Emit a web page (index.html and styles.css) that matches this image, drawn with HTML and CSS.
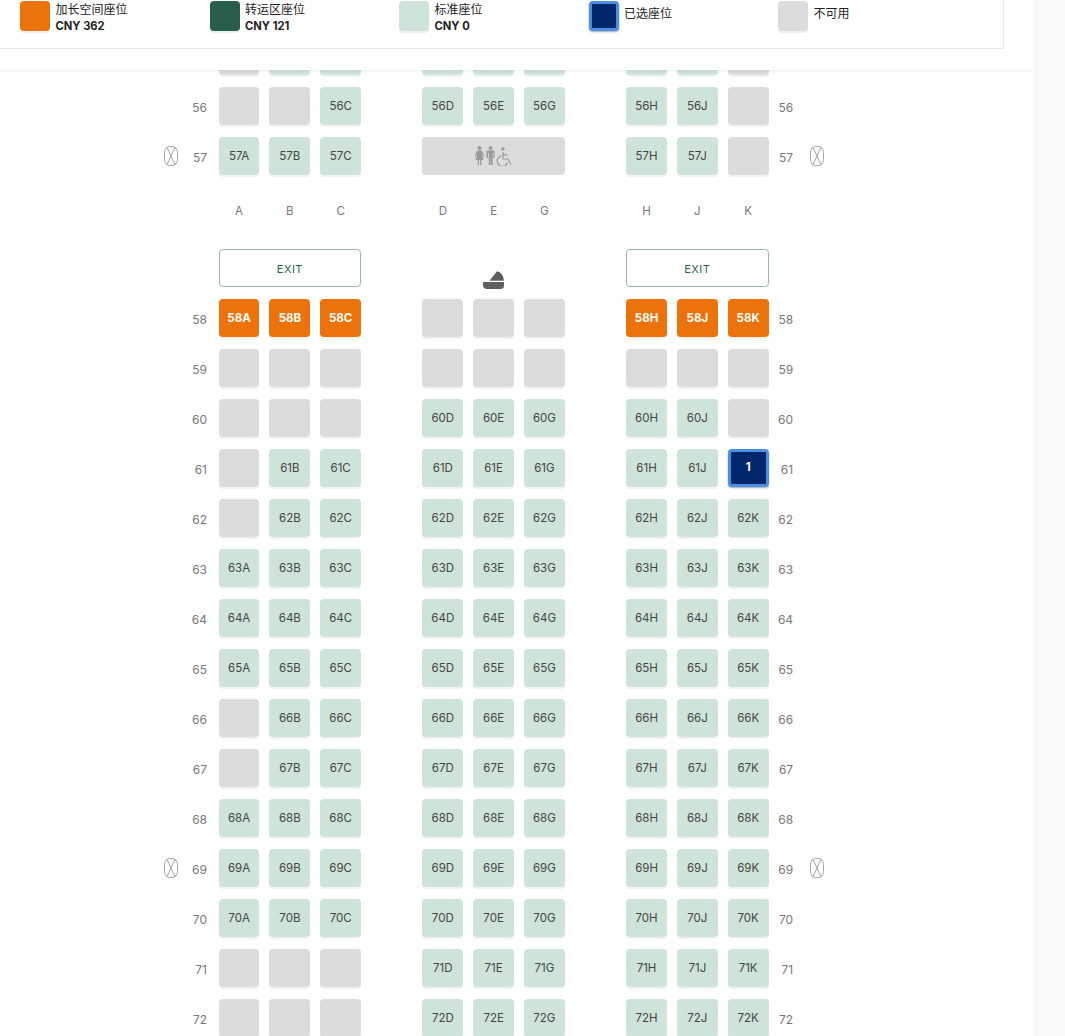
FILE: index.html
```html
<!DOCTYPE html>
<html lang="zh">
<head>
<meta charset="utf-8">
<title>选择座位</title>
<link rel="stylesheet" href="styles.css">
</head>
<body>
<svg class="defs" width="0" height="0" aria-hidden="true">
  <symbol id="exit-mark" viewBox="0 0 14 20">
    <rect x="0.5" y="0.5" width="13" height="19" rx="5" ry="6" fill="none" stroke="#a3a3a3" stroke-width="1"/>
    <path d="M2.500 1 Q5.500 6 7 10 Q8.500 14 11.500 19 M11.500 1 Q8.500 6 7 10 Q5.500 14 2.500 19" fill="none" stroke="#a3a3a3" stroke-width="1"/>
  </symbol>
</svg>
<main class="main">
  <header class="legend-bar">
    <div class="legend">
      <div class="legend-item"><span class="swatch swatch-extra"></span><div class="legend-text"><div>加长空间座位</div><strong>CNY 362</strong></div></div>
      <div class="legend-item"><span class="swatch swatch-transfer"></span><div class="legend-text"><div>转运区座位</div><strong>CNY 121</strong></div></div>
      <div class="legend-item"><span class="swatch swatch-standard"></span><div class="legend-text"><div>标准座位</div><strong>CNY 0</strong></div></div>
      <div class="legend-item"><span class="swatch swatch-selected"></span><div class="legend-text legend-single"><div>已选座位</div></div></div>
      <div class="legend-item"><span class="swatch swatch-none"></span><div class="legend-text legend-single"><div>不可用</div></div></div>
    </div>
  </header>
  <section class="map">
    <div class="row"><span class="mark"></span><span class="num"></span>
      <div class="group"><div class="seat no"></div><div class="seat">55B</div><div class="seat">55C</div></div>
      <div class="group"><div class="seat">55D</div><div class="seat">55E</div><div class="seat">55G</div></div>
      <div class="group"><div class="seat">55H</div><div class="seat">55J</div><div class="seat no"></div></div>
      <span class="num num-r"></span></div>
    <div class="row"><span class="mark"></span><span class="num">56</span>
      <div class="group"><div class="seat no"></div><div class="seat no"></div><div class="seat">56C</div></div>
      <div class="group"><div class="seat">56D</div><div class="seat">56E</div><div class="seat">56G</div></div>
      <div class="group"><div class="seat">56H</div><div class="seat">56J</div><div class="seat no"></div></div>
      <span class="num num-r">56</span></div>
    <div class="row"><svg class="mark"><use href="#exit-mark"/></svg><span class="num">57</span>
      <div class="group"><div class="seat">57A</div><div class="seat">57B</div><div class="seat">57C</div></div>
      <div class="group"><div class="seat no lav">
        <svg class="lav-icon" width="38" height="20" viewBox="0 0 38 20" fill="#999">
          <circle cx="4.500" cy="2" r="2"/><path d="M3 4.500h3c.6 0 1 .3 1.200.8L9.300 10l-1.100.5-1.700-3.300L8.500 14H6.300v5H5v-5h-1v5H2.700v-5H.5L2.500 7.200.8 10.500-.3 10l2.100-4.700c.2-.5.6-.8 1.200-.8z"/>
          <circle cx="15.500" cy="2" r="2"/><path d="M12.800 4.500h5.400c.8 0 1.300.5 1.300 1.300V12h-1.300V7h-.5v12h-1.700v-7h-.5v7h-1.700V7H13v5h-1.500V5.800c0-.8.5-1.300 1.300-1.300z"/>
          <g fill="none" stroke="#999" stroke-width="1.200"><path d="M28 6v7h5l3 5.500"/><path d="M28 9h4.500"/><path d="M26.500 9.800a5.300 5.300 0 1 0 6 7"/></g>
          <circle cx="27.800" cy="3" r="1.800"/>
        </svg>
      </div></div>
      <div class="group"><div class="seat">57H</div><div class="seat">57J</div><div class="seat no"></div></div>
      <span class="num num-r">57</span><svg class="mark mark-r"><use href="#exit-mark"/></svg></div>
    <div class="row letters"><span class="mark"></span><span class="num"></span>
      <div class="group"><span class="letter">A</span><span class="letter">B</span><span class="letter">C</span></div>
      <div class="group"><span class="letter">D</span><span class="letter">E</span><span class="letter">G</span></div>
      <div class="group"><span class="letter">H</span><span class="letter">J</span><span class="letter">K</span></div>
    </div>
    <div class="row exit-row"><span class="mark"></span><span class="num"></span>
      <div class="group"><div class="exit">EXIT</div></div>
      <div class="group group-center">
        <svg width="22" height="18" viewBox="0 0 22 18" fill="#5f5f5f">
          <path d="M6.500 9.800 L14 0.300 Q20 1.500 21 9.800z"/>
          <path d="M0 11 H21 V14.500 Q21 18 17.500 18 H4 Q0 18 0 14z"/>
        </svg>
      </div>
      <div class="group"><div class="exit">EXIT</div></div>
    </div>
    <div class="row"><span class="mark"></span><span class="num">58</span>
      <div class="group"><div class="seat extra">58A</div><div class="seat extra">58B</div><div class="seat extra">58C</div></div>
      <div class="group"><div class="seat no"></div><div class="seat no"></div><div class="seat no"></div></div>
      <div class="group"><div class="seat extra">58H</div><div class="seat extra">58J</div><div class="seat extra">58K</div></div>
      <span class="num num-r">58</span></div>
    <div class="row"><span class="mark"></span><span class="num">59</span>
      <div class="group"><div class="seat no"></div><div class="seat no"></div><div class="seat no"></div></div>
      <div class="group"><div class="seat no"></div><div class="seat no"></div><div class="seat no"></div></div>
      <div class="group"><div class="seat no"></div><div class="seat no"></div><div class="seat no"></div></div>
      <span class="num num-r">59</span></div>
    <div class="row"><span class="mark"></span><span class="num">60</span>
      <div class="group"><div class="seat no"></div><div class="seat no"></div><div class="seat no"></div></div>
      <div class="group"><div class="seat">60D</div><div class="seat">60E</div><div class="seat">60G</div></div>
      <div class="group"><div class="seat">60H</div><div class="seat">60J</div><div class="seat no"></div></div>
      <span class="num num-r">60</span></div>
    <div class="row"><span class="mark"></span><span class="num">61</span>
      <div class="group"><div class="seat no"></div><div class="seat">61B</div><div class="seat">61C</div></div>
      <div class="group"><div class="seat">61D</div><div class="seat">61E</div><div class="seat">61G</div></div>
      <div class="group"><div class="seat">61H</div><div class="seat">61J</div><div class="seat selected">1</div></div>
      <span class="num num-r">61</span></div>
    <div class="row"><span class="mark"></span><span class="num">62</span>
      <div class="group"><div class="seat no"></div><div class="seat">62B</div><div class="seat">62C</div></div>
      <div class="group"><div class="seat">62D</div><div class="seat">62E</div><div class="seat">62G</div></div>
      <div class="group"><div class="seat">62H</div><div class="seat">62J</div><div class="seat">62K</div></div>
      <span class="num num-r">62</span></div>
    <div class="row"><span class="mark"></span><span class="num">63</span>
      <div class="group"><div class="seat">63A</div><div class="seat">63B</div><div class="seat">63C</div></div>
      <div class="group"><div class="seat">63D</div><div class="seat">63E</div><div class="seat">63G</div></div>
      <div class="group"><div class="seat">63H</div><div class="seat">63J</div><div class="seat">63K</div></div>
      <span class="num num-r">63</span></div>
    <div class="row"><span class="mark"></span><span class="num">64</span>
      <div class="group"><div class="seat">64A</div><div class="seat">64B</div><div class="seat">64C</div></div>
      <div class="group"><div class="seat">64D</div><div class="seat">64E</div><div class="seat">64G</div></div>
      <div class="group"><div class="seat">64H</div><div class="seat">64J</div><div class="seat">64K</div></div>
      <span class="num num-r">64</span></div>
    <div class="row"><span class="mark"></span><span class="num">65</span>
      <div class="group"><div class="seat">65A</div><div class="seat">65B</div><div class="seat">65C</div></div>
      <div class="group"><div class="seat">65D</div><div class="seat">65E</div><div class="seat">65G</div></div>
      <div class="group"><div class="seat">65H</div><div class="seat">65J</div><div class="seat">65K</div></div>
      <span class="num num-r">65</span></div>
    <div class="row"><span class="mark"></span><span class="num">66</span>
      <div class="group"><div class="seat no"></div><div class="seat">66B</div><div class="seat">66C</div></div>
      <div class="group"><div class="seat">66D</div><div class="seat">66E</div><div class="seat">66G</div></div>
      <div class="group"><div class="seat">66H</div><div class="seat">66J</div><div class="seat">66K</div></div>
      <span class="num num-r">66</span></div>
    <div class="row"><span class="mark"></span><span class="num">67</span>
      <div class="group"><div class="seat no"></div><div class="seat">67B</div><div class="seat">67C</div></div>
      <div class="group"><div class="seat">67D</div><div class="seat">67E</div><div class="seat">67G</div></div>
      <div class="group"><div class="seat">67H</div><div class="seat">67J</div><div class="seat">67K</div></div>
      <span class="num num-r">67</span></div>
    <div class="row"><span class="mark"></span><span class="num">68</span>
      <div class="group"><div class="seat">68A</div><div class="seat">68B</div><div class="seat">68C</div></div>
      <div class="group"><div class="seat">68D</div><div class="seat">68E</div><div class="seat">68G</div></div>
      <div class="group"><div class="seat">68H</div><div class="seat">68J</div><div class="seat">68K</div></div>
      <span class="num num-r">68</span></div>
    <div class="row"><svg class="mark"><use href="#exit-mark"/></svg><span class="num">69</span>
      <div class="group"><div class="seat">69A</div><div class="seat">69B</div><div class="seat">69C</div></div>
      <div class="group"><div class="seat">69D</div><div class="seat">69E</div><div class="seat">69G</div></div>
      <div class="group"><div class="seat">69H</div><div class="seat">69J</div><div class="seat">69K</div></div>
      <span class="num num-r">69</span><svg class="mark mark-r"><use href="#exit-mark"/></svg></div>
    <div class="row"><span class="mark"></span><span class="num">70</span>
      <div class="group"><div class="seat">70A</div><div class="seat">70B</div><div class="seat">70C</div></div>
      <div class="group"><div class="seat">70D</div><div class="seat">70E</div><div class="seat">70G</div></div>
      <div class="group"><div class="seat">70H</div><div class="seat">70J</div><div class="seat">70K</div></div>
      <span class="num num-r">70</span></div>
    <div class="row"><span class="mark"></span><span class="num">71</span>
      <div class="group"><div class="seat no"></div><div class="seat no"></div><div class="seat no"></div></div>
      <div class="group"><div class="seat">71D</div><div class="seat">71E</div><div class="seat">71G</div></div>
      <div class="group"><div class="seat">71H</div><div class="seat">71J</div><div class="seat">71K</div></div>
      <span class="num num-r">71</span></div>
    <div class="row"><span class="mark"></span><span class="num">72</span>
      <div class="group"><div class="seat no"></div><div class="seat no"></div><div class="seat no"></div></div>
      <div class="group"><div class="seat">72D</div><div class="seat">72E</div><div class="seat">72G</div></div>
      <div class="group"><div class="seat">72H</div><div class="seat">72J</div><div class="seat">72K</div></div>
      <span class="num num-r">72</span></div>
  </section>
</main>
</body>
</html>
```
FILE: styles.css
```css
* { box-sizing: border-box; }
html, body { margin: 0; height: 100%; overflow: hidden; }
body {
  background: #f9f9f9;
  font-family: "Inter", "Noto Sans CJK SC", sans-serif;
  color: #444;
}
.defs { position: absolute; }
.main {
  position: relative;
  width: 1034px;
  height: 100vh;
  overflow: hidden;
  background: #fff;
}
.legend-bar {
  position: absolute;
  top: 0;
  left: 0;
  right: 0;
  z-index: 2;
  height: 70px;
  background: #fff;
  box-shadow: 0 1px 3px rgba(0, 0, 0, .08);
}
.legend {
  display: flex;
  width: 1004px;
  height: 49px;
  padding: 1px 0 0 20px;
  background: #fff;
  border-right: 1px solid #e2e8f4;
  border-bottom: 1px solid #e2e8f4;
}
.legend-item {
  display: flex;
  flex: 0 0 189.5px;
  gap: 5.5px;
}
.swatch {
  flex: none;
  width: 30px;
  height: 30px;
  border-radius: 4px;
  box-shadow: 0 2px 0 rgba(0, 0, 0, .06);
}
.swatch-extra { background: #ec730b; }
.swatch-transfer { background: #295f4a; }
.swatch-standard { background: #cee4d8; }
.swatch-none { background: #dcdcdc; }
.swatch-selected {
  background: #00266b;
  border: 3px solid #4a90e2;
  box-shadow: 0 1px 2px rgba(0, 0, 0, .35);
}
.legend-text {
  font-size: 12px;
  line-height: 17px;
  color: #222;
  font-weight: 400;
}
.legend-text strong {
  display: block;
  font-size: 11.2px;
  font-weight: 700;
  line-height: 17px;
}
.legend-single { padding-top: 4px; }
.map {
  padding: 37px 0 0 163px;
}
.row {
  display: flex;
  align-items: flex-start;
  height: 50px;
}
.mark {
  flex: none;
  width: 14px;
  height: 20px;
  margin: 9px 2px 0 1px;
}
.row span.mark { height: 0; margin-top: 0; }
.num {
  flex: none;
  width: 28px;
  margin-right: 11.68px;
  padding-top: 13px;
  margin-left: -1px;
  text-align: right;
  font-size: 12px;
  line-height: 16px;
  color: #777;
}
.num-r {
  width: 24.6px;
  margin: 0;
}
.mark-r { margin-left: 16.8px; }
.group {
  display: flex;
  flex: none;
  width: 142.4px;
  gap: 10px;
  margin-right: 61.35px;
}
.group:nth-of-type(3) { margin-right: 0; }
.seat {
  flex: none;
  width: 40.8px;
  height: 38px;
  border-radius: 4px;
  background: #cee4d8;
  box-shadow: 0 2px 0 rgba(0, 0, 0, .05);
  text-align: center;
  font-size: 11.5px;
  line-height: 38px;
  color: #444;
}
.seat.no { background: #dcdcdc; }
.seat.extra { background: #ec730b; color: #fff; font-weight: 700; }
.seat.selected {
  background: #00266b;
  border: 3px solid #4a90e2;
  box-shadow: 0 1px 2px rgba(0, 0, 0, .35);
  color: #fff;
  font-weight: 700;
  line-height: 30px;
}
.seat.lav {
  display: flex;
  align-items: center;
  justify-content: center;
  width: 100%;
  box-shadow: none;
}
.lav-icon { margin-left: 1px; }
.letters .letter {
  flex: none;
  width: 40.8px;
  padding-top: 16px;
  text-align: center;
  font-size: 11.5px;
  line-height: 16px;
  color: #777;
}
.exit-row { margin-top: 12px; }
.exit {
  width: 100%;
  height: 38px;
  border: 1px solid #94b8aa;
  border-radius: 4px;
  text-align: center;
  font-size: 11px;
  letter-spacing: .5px;
  line-height: 38px;
  color: #295f4a;
}
.group-center {
  justify-content: center;
  padding-top: 22px;
}
```
